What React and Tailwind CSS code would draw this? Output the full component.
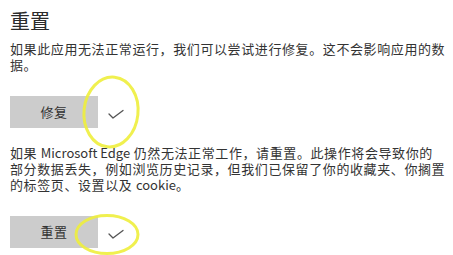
import React from 'react'

const font = { fontFamily: '"Noto Sans CJK SC", "Noto Sans", sans-serif' }

function Check() {
  return (
    <svg width="16" height="16" viewBox="0 0 16 16" className="ml-[10px]">
      <path d="M1 10 L5 14 L15 6.5" fill="none" stroke="#555" strokeWidth="1.3" strokeLinecap="round" strokeLinejoin="round" />
    </svg>
  )
}

function ActionRow({ label, className }) {
  return (
    <div className={`flex items-center ${className}`}>
      <button className="w-[88px] h-[32px] bg-[#cccccc] text-[#333] text-[13px] leading-[16px] tracking-[0.6px] flex items-center justify-center">
        {label}
      </button>
      <Check />
    </div>
  )
}

function Latin({ children }) {
  return <span className="tracking-normal">{children}</span>
}

export default function App() {
  return (
    <div className="relative w-[453px] h-[255px] bg-white overflow-hidden pl-[10px] pt-[7px] text-[#333]" style={font}>
      <h1 className="text-[20px] leading-[28px] text-[#2b2b2b]">重置</h1>
      <p className="mt-[6px] text-[13px] leading-[16px] tracking-[0.6px] whitespace-nowrap">
        如果此应用无法正常运行，我们可以尝试进行修复。这不会影响应用的数<br />据。
      </p>
      <ActionRow label="修复" className="mt-[23px]" />
      <p className="mt-[17px] text-[13px] leading-[16px] tracking-[0.6px] whitespace-nowrap">
        如果 <Latin>Microsoft Edge</Latin> 仍然无法正常工作，请重置。此操作将会导致你的<br />
        部分数据丢失，例如浏览历史记录，但我们已保留了你的收藏夹、你搁置<br />
        的标签页、设置以及 <Latin>cookie</Latin>。
      </p>
      <ActionRow label="重置" className="mt-[23px]" />

      {/* highlighter marks */}
      <svg className="absolute left-[80px] top-[74px] rotate-[6deg]" width="62" height="76" viewBox="0 0 62 76">
        <ellipse cx="31" cy="38" rx="27" ry="35" fill="none" stroke="#eeee3c" strokeWidth="3" opacity="0.9" />
      </svg>
      <svg className="absolute left-[72px] top-[212px]" width="70" height="45" viewBox="0 0 70 45">
        <ellipse cx="35" cy="22.5" rx="31" ry="19" fill="none" stroke="#eeee3c" strokeWidth="3" opacity="0.9" />
      </svg>
    </div>
  )
}
